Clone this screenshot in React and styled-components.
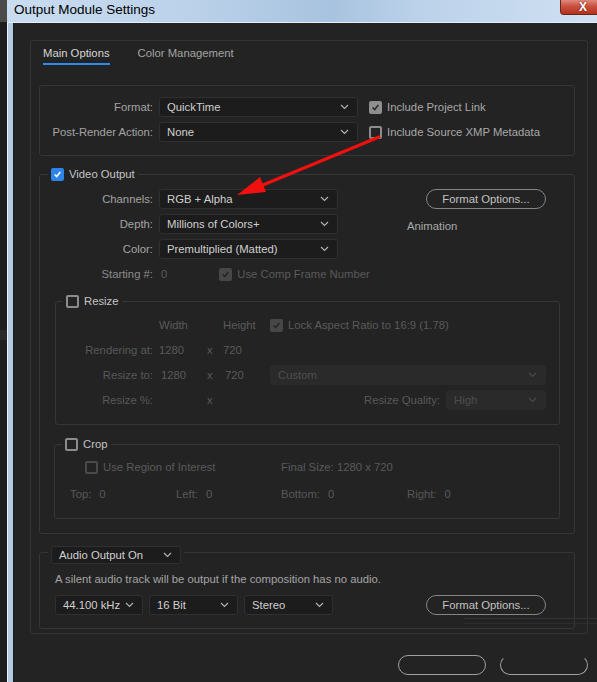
import React from 'react';
import styled, { createGlobalStyle } from 'styled-components';

const GlobalStyle = createGlobalStyle`
  html, body { margin: 0; padding: 0; background: #232323; }
  body { font-family: "Liberation Sans", Arial, sans-serif; font-size: 11.3px; }
  * { box-sizing: border-box; }
`;

const Screen = styled.div`
  position: relative;
  width: 597px;
  height: 682px;
  overflow: hidden;
  display: grid;
  grid-template-columns: 7px 1fr;
  background: #232323;
`;

const AppEdge = styled.div`
  background: linear-gradient(180deg, #4a4a4a 0 22px, #1e1e1e 22px 330px, #2a2a2a 330px 340px, #1e1e1e 340px);
`;

const Window = styled.div`
  display: flex;
  flex-direction: column;
  min-width: 0;
`;

const TitleBar = styled.div`
  height: 23px;
  flex: none;
  display: flex;
  justify-content: space-between;
  align-items: flex-start;
  padding-left: 7px;
  background: linear-gradient(90deg, #c9dcf0 0%, #bcd2ea 30%, #a8c3df 55%, #bcd2ea 70%, #cfe0f2 100%);
  border-bottom: 1px solid #e6eef8;
`;

const Title = styled.div`
  font-family: "Liberation Sans", Arial, sans-serif;
  font-size: 13.5px;
  line-height: 19px;
  color: #000;
`;

const CloseButton = styled.div`
  width: 46px;
  height: 15px;
  margin-right: -9px;
  display: flex;
  align-items: center;
  justify-content: center;
  background: linear-gradient(180deg, #e08a7c 0%, #c9503e 45%, #b2321f 100%);
  border: 1px solid #6b2318;
  border-top: none;
  border-bottom-left-radius: 4px;
  color: #fff;
  font-weight: bold;
  font-size: 12px;
  line-height: 12px;
  text-shadow: 0 0 2px #5a1a10;
`;

const WindowBody = styled.div`
  flex: 1;
  display: flex;
  min-height: 0;
`;

const Frame = styled.div`
  width: 6px;
  flex: none;
  border-left: 1px solid #eef3f9;
  background: #b4cbe4;
`;

const Client = styled.div`
  flex: 1;
  min-width: 0;
  position: relative;
  background: #232323;
  border-left: 1px solid #1a1a1a;
  padding: 17px 9px 0 16px;
`;

const TabPanel = styled.div`
  height: 594px;
  border: 1px solid #343434;
  border-radius: 3px;
  display: flex;
  flex-direction: column;
`;

const TabBar = styled.div`
  display: flex;
  gap: 28px;
  padding: 0 12px;
`;

const Tab = styled.div`
  padding: 4px 0 2px;
  line-height: 16px;
  border-bottom: 2px solid ${p => (p.$active ? '#2d8ceb' : 'transparent')};
  color: ${p => (p.$active ? '#d6d6d6' : '#a3a3a3')};
`;

const TabContent = styled.div`
  margin-top: 20px;
  padding: 0 12px 0 8px;
  display: flex;
  flex-direction: column;
`;

const Box = styled.div`
  border: 1px solid #363636;
  border-radius: 3px;
  padding: 11px 0 13px;
`;

const FormGrid = styled.div`
  display: grid;
  grid-template-columns: ${p => p.$cols};
  grid-auto-rows: 20px;
  column-gap: ${p => p.$gap ?? 6}px;
  row-gap: 5px;
  align-items: center;
`;

const Label = styled.span`
  text-align: right;
  white-space: nowrap;
  color: ${p => (p.$dim ? '#585858' : p.$mid ? '#8a8a8a' : '#a3a3a3')};
`;

const Value = styled.span`
  white-space: nowrap;
  color: ${p => (p.$dim ? '#5a5a5a' : '#cfcfcf')};
  padding-left: ${p => p.$pl || 0}px;
`;

const Group = styled.fieldset`
  margin: ${p => p.$m || 0};
  padding: ${p => p.$pad || 0};
  min-width: 0;
  border: 1px solid #363636;
  border-radius: 3px;
`;

const Legend = styled.legend`
  margin-left: ${p => p.$ml ?? 8}px;
  padding: ${p => p.$pad || '0 3px'};
  display: flex;
  align-items: center;
  gap: 5px;
  line-height: 14px;
  color: #c4c4c4;
`;

const Inset = styled.div`
  padding-left: ${p => p.$pl || 0}px;
`;

const SelectBox = styled.div`
  height: ${p => p.$h || 20}px;
  width: ${p => (p.$w ? `${p.$w}px` : 'auto')};
  display: flex;
  align-items: center;
  justify-content: space-between;
  padding: 0 8px 0 7px;
  background: ${p => (p.$disabled ? '#2a2a2a' : '#1c1c1c')};
  border: 1px solid ${p => (p.$disabled ? '#2a2a2a' : '#303030')};
  border-radius: 3px;
  color: ${p => (p.$disabled ? '#4e4e4e' : '#d0d0d0')};
  white-space: nowrap;
`;

const Select = ({ children, w, h, disabled }) => (
  <SelectBox $w={w} $h={h} $disabled={disabled}>
    <span>{children}</span>
    <svg width="9" height="6" viewBox="0 0 9 6">
      <polyline points="1,1 4.5,4.5 8,1" fill="none" stroke={disabled ? '#4a4a4a' : '#b0b0b0'} strokeWidth="1.2" />
    </svg>
  </SelectBox>
);

const tones = {
  blue: { bg: '#2c84e8', border: '#2c84e8', mark: '#fff' },
  gray: { bg: '#8e8e8e', border: '#8e8e8e', mark: '#2a2a2a' },
  dim: { bg: '#474747', border: '#474747', mark: '#262626' },
  off: { bg: 'transparent', border: '#8c8c8c' },
  offDim: { bg: 'transparent', border: '#4a4a4a' },
};

const CheckSquare = styled.span`
  width: 13px;
  height: 13px;
  flex: none;
  border-radius: 2px;
  display: inline-flex;
  align-items: center;
  justify-content: center;
  background: ${p => tones[p.$tone].bg};
  border: 2px solid ${p => tones[p.$tone].border};
`;

const Check = ({ tone }) => (
  <CheckSquare $tone={tone}>
    {tones[tone].mark && (
      <svg width="11" height="11" viewBox="0 0 11 11">
        <polyline points="2,5.5 4.5,8 9,2.5" fill="none" stroke={tones[tone].mark} strokeWidth="2" />
      </svg>
    )}
  </CheckSquare>
);

const CheckRow = styled.span`
  display: inline-flex;
  align-items: center;
  gap: 5px;
  white-space: nowrap;
  margin-left: ${p => p.$ml || 0}px;
  color: ${p => (p.$dim ? '#5a5a5a' : '#a8a8a8')};
`;

const PillButton = styled.div`
  width: 120px;
  height: 20px;
  flex: none;
  margin-left: ${p => p.$ml || 0}px;
  border: 1.5px solid #858585;
  border-radius: 10px;
  display: flex;
  align-items: center;
  justify-content: center;
  color: #c2c2c2;
`;

const VideoTop = styled.div`
  display: flex;
  align-items: flex-start;
`;

const RightCol = styled.div`
  margin-left: 69px;
  display: flex;
  flex-direction: column;
`;

const Note = styled.div`
  margin-top: 8px;
  line-height: 18px;
  color: #a8a8a8;
`;

const Cell = styled.div`
  display: flex;
  align-items: center;
  gap: ${p => p.$gap || 0}px;
  justify-content: ${p => p.$end ? 'flex-end' : 'flex-start'};
  grid-column: ${p => p.$span || 'auto'};
  padding-left: ${p => p.$pl || 0}px;
  white-space: nowrap;
`;

const CropGrid = styled.div`
  display: grid;
  grid-template-columns: 106px 105px 126px 1fr;
  grid-auto-rows: 18px;
  row-gap: 9px;
  align-items: center;
  padding-left: 15px;
`;

const AudioText = styled.div`
  line-height: 16px;
  color: #a3a3a3;
  white-space: nowrap;
`;

const AudioRow = styled.div`
  margin-top: 8px;
  display: flex;
  align-items: center;
  justify-content: space-between;
`;

const SelectGroup = styled.div`
  display: flex;
  gap: 6px;
`;

const Footer = styled.div`
  margin-top: 21px;
  display: flex;
  justify-content: flex-end;
  gap: 14px;
`;

const DialogButton = styled.div`
  width: 88px;
  height: 20px;
  border: 1.5px solid #a0a0a0;
  border-top-color: ${p => (p.$hidden ? 'transparent' : '#a0a0a0')};
  border-radius: 10px;
`;

const PasteEdge = styled.div`
  position: absolute;
  left: 450px;
  top: 595px;
  right: 0;
  height: 6px;
  border-top: 1px solid #333;
  border-bottom: 1px solid #2e2e2e;
`;

const ArrowLayer = styled.svg`
  position: absolute;
  left: 0;
  top: 0;
  pointer-events: none;
`;

export default function App() {
  return (
    <>
      <GlobalStyle />
      <Screen>
        <AppEdge />
        <Window>
          <TitleBar>
            <Title>Output Module Settings</Title>
            <CloseButton>X</CloseButton>
          </TitleBar>
          <WindowBody>
            <Frame />
            <Client>
              <TabPanel>
                <TabBar>
                  <Tab $active>Main Options</Tab>
                  <Tab>Color Management</Tab>
                </TabBar>
                <TabContent>
                  <Box>
                    <FormGrid $cols="113px 199px 1fr">
                      <Label>Format:</Label>
                      <Select>QuickTime</Select>
                      <CheckRow $ml={5}><Check tone="gray" />Include Project Link</CheckRow>
                      <Label>Post-Render Action:</Label>
                      <Select>None</Select>
                      <CheckRow $ml={5}><Check tone="off" />Include Source XMP Metadata</CheckRow>
                    </FormGrid>
                  </Box>

                  <Group $m="11px 0 0" $pad="8px 0 14px">
                    <Legend><Check tone="blue" />Video Output</Legend>
                    <VideoTop>
                      <FormGrid $cols="113px 179px">
                        <Label>Channels:</Label>
                        <Select>RGB + Alpha</Select>
                        <Label>Depth:</Label>
                        <Select>Millions of Colors+</Select>
                        <Label>Color:</Label>
                        <Select>Premultiplied (Matted)</Select>
                        <Label $mid>Starting #:</Label>
                        <Cell>
                          <Value $dim $pl={2}>0</Value>
                          <CheckRow $dim $ml={52}><Check tone="dim" />Use Comp Frame Number</CheckRow>
                        </Cell>
                      </FormGrid>
                      <RightCol>
                        <PillButton $ml={19}>Format Options...</PillButton>
                        <Note>Animation</Note>
                      </RightCol>
                    </VideoTop>

                    <Group $m="10px 14px 0 15px" $pad="7px 14px 14px 0">
                      <Legend $ml={7}><Check tone="off" />Resize</Legend>
                      <FormGrid $cols="97px 54px 16px 47px 276px" $gap={0}>
                        <span />
                        <Value $dim $pl={6}>Width</Value>
                        <span />
                        <Value $dim>Height</Value>
                        <CheckRow $dim><Check tone="dim" />Lock Aspect Ratio to 16:9 (1.78)</CheckRow>

                        <Label $dim>Rendering at:</Label>
                        <Value $dim $pl={6}>1280</Value>
                        <Value $dim>x</Value>
                        <Value $dim>720</Value>
                        <span />

                        <Label $dim>Resize to:</Label>
                        <Value $dim $pl={8}>1280</Value>
                        <Value $dim>x</Value>
                        <Value $dim $pl={2}>720</Value>
                        <Select disabled>Custom</Select>

                        <Label $dim>Resize %:</Label>
                        <span />
                        <Value $dim>x</Value>
                        <span />
                        <Cell $end $gap={6}>
                          <Label $dim>Resize Quality:</Label>
                          <Select disabled w={100}>High</Select>
                        </Cell>
                      </FormGrid>
                    </Group>

                    <Group $m="12px 14px 0 14px" $pad="7px 0 15px 0">
                      <Legend $ml={7}><Check tone="off" />Crop</Legend>
                      <CropGrid>
                        <Cell $span="span 2" $pl={15}>
                          <CheckRow $dim><Check tone="offDim" />Use Region of Interest</CheckRow>
                        </Cell>
                        <Cell $span="span 2"><Value $dim>Final Size: 1280 x 720</Value></Cell>
                        <Cell $gap={8}><Label $dim>Top:</Label><Value $dim>0</Value></Cell>
                        <Cell $gap={8}><Label $dim>Left:</Label><Value $dim>0</Value></Cell>
                        <Cell $gap={8}><Label $dim>Bottom:</Label><Value $dim>0</Value></Cell>
                        <Cell $gap={8}><Label $dim>Right:</Label><Value $dim>0</Value></Cell>
                      </CropGrid>
                    </Group>
                  </Group>

                  <Group $m="6px 0 0" $pad="7px 28px 13px 0">
                    <Legend $pad="6px 3px 0">
                      <Select w={130} h={18}>Audio Output On</Select>
                    </Legend>
                    <Inset $pl={15}>
                      <AudioText>A silent audio track will be output if the composition has no audio.</AudioText>
                      <AudioRow>
                        <SelectGroup>
                          <Select w={88}>44.100 kHz</Select>
                          <Select w={89}>16 Bit</Select>
                          <Select w={89}>Stereo</Select>
                        </SelectGroup>
                        <PillButton>Format Options...</PillButton>
                      </AudioRow>
                    </Inset>
                  </Group>
                </TabContent>
              </TabPanel>
              <Footer>
                <DialogButton />
                <DialogButton $hidden />
              </Footer>
              <PasteEdge />
            </Client>
          </WindowBody>
        </Window>
        <ArrowLayer width="597" height="682" viewBox="0 0 597 682">
          <line x1="379" y1="137" x2="258" y2="187" stroke="#f01010" strokeWidth="3" strokeLinecap="round" />
          <polygon points="237,195 260,177 266,192" fill="#f01010" />
        </ArrowLayer>
      </Screen>
    </>
  );
}
